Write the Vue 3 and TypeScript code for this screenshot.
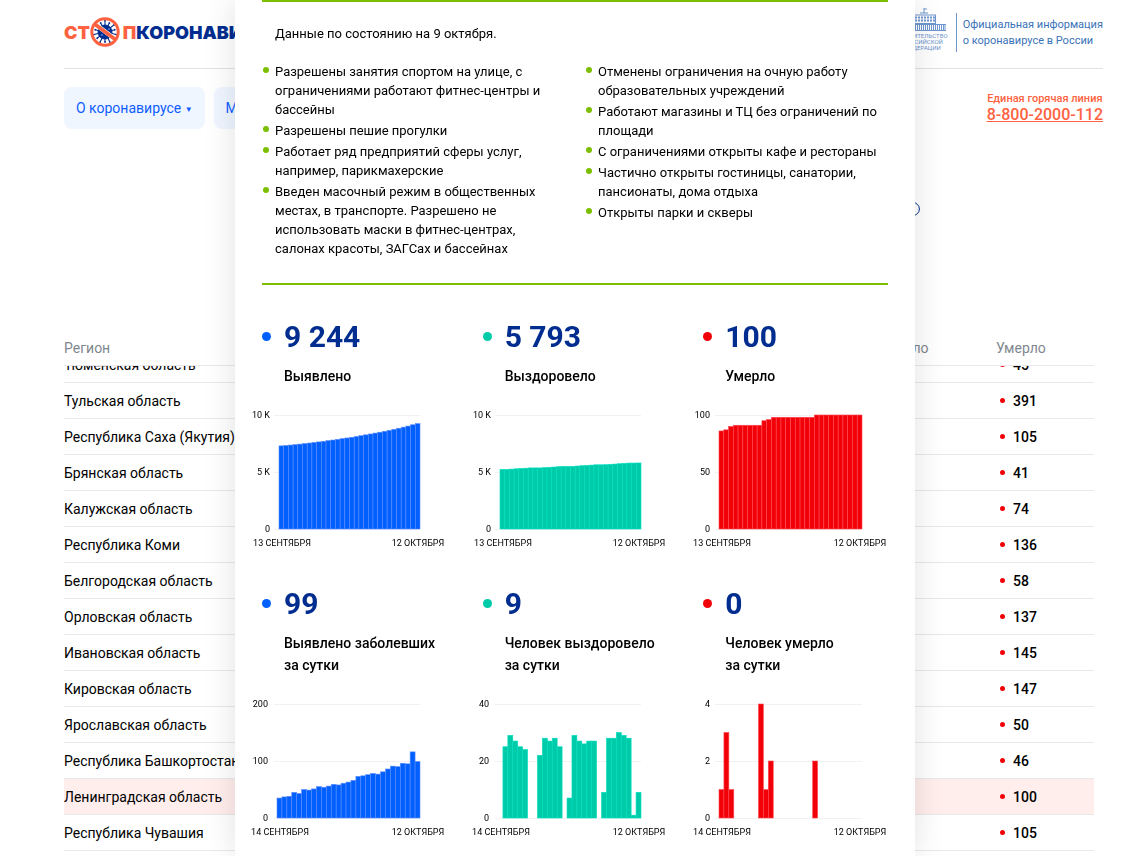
<script setup lang="ts">
import { onMounted, ref } from 'vue'

interface Region {
  name: string
  deaths: number
  active?: boolean
}

interface Stat {
  value: string
  label: string
  color: string
  edge: string
  first: string
  max: number
  ticks: string[]
  start: number
  end: number
  labelEnd: number
  data: number[]
}

const regions: Region[] = [
  { name: 'Тюменская область', deaths: 45 },
  { name: 'Тульская область', deaths: 391 },
  { name: 'Республика Саха (Якутия)', deaths: 105 },
  { name: 'Брянская область', deaths: 41 },
  { name: 'Калужская область', deaths: 74 },
  { name: 'Республика Коми', deaths: 136 },
  { name: 'Белгородская область', deaths: 58 },
  { name: 'Орловская область', deaths: 137 },
  { name: 'Ивановская область', deaths: 145 },
  { name: 'Кировская область', deaths: 147 },
  { name: 'Ярославская область', deaths: 50 },
  { name: 'Республика Башкортостан', deaths: 46 },
  { name: 'Ленинградская область', deaths: 100, active: true },
  { name: 'Республика Чувашия', deaths: 105 }
]

const measures: string[][] = [
  [
    'Разрешены занятия спортом на улице, с ограничениями работают фитнес-центры и бассейны',
    'Разрешены пешие прогулки',
    'Работает ряд предприятий сферы услуг, например, парикмахерские',
    'Введен масочный режим в общественных местах, в транспорте. Разрешено не использовать маски в фитнес-центрах, салонах красоты, ЗАГСах и бассейнах'
  ],
  [
    'Отменены ограничения на очную работу образовательных учреждений',
    'Работают магазины и ТЦ без ограничений по площади',
    'С ограничениями открыты кафе и рестораны',
    'Частично открыты гостиницы, санатории, пансионаты, дома отдыха',
    'Открыты парки и скверы'
  ]
]

const dailyCases = [
  35, 37, 38, 45, 43, 50, 49, 51, 55, 54, 56, 59, 58, 61, 63, 66, 73, 74, 76, 78, 77, 81, 86, 91,
  90, 96, 95, 116, 99
]
const dailyRecovered = [
  0, 25, 29, 27, 25, 24, 0, 0, 22, 28, 27, 28, 25, 0, 7, 29, 27, 26, 27, 27, 0, 9, 28, 28, 30, 29,
  28, 1, 9
]
const dailyDeaths = [
  1, 3, 1, 0, 0, 0, 0, 0, 4, 1, 2, 0, 0, 0, 0, 0, 0, 0, 0, 2, 0, 0, 0, 0, 0, 0, 0, 0, 0
]

function accumulate(daily: number[], total: number): number[] {
  const result = [total - daily.reduce((a, b) => a + b, 0)]
  for (const d of daily) result.push(result[result.length - 1] + d)
  return result
}

const blue = { color: '#0060ff', edge: '#5b8cff' }
const green = { color: '#00cba8', edge: '#00dfc0' }
const red = { color: '#f20008', edge: '#ff4a55' }

const stats: Stat[] = [
  { value: '9 244', label: 'Выявлено', ...blue, first: '13 СЕНТЯБРЯ', max: 10000, ticks: ['10 K', '5 K', '0'], start: 29, end: 170, labelEnd: 20, data: accumulate(dailyCases, 9244) },
  { value: '5 793', label: 'Выздоровело', ...green, first: '13 СЕНТЯБРЯ', max: 10000, ticks: ['10 K', '5 K', '0'], start: 29, end: 170, labelEnd: 20, data: accumulate(dailyRecovered, 5793) },
  { value: '100', label: 'Умерло', ...red, first: '13 СЕНТЯБРЯ', max: 100, ticks: ['100', '50', '0'], start: 28, end: 171, labelEnd: 19, data: accumulate(dailyDeaths, 100) },
  { value: '99', label: 'Выявлено заболевших за\u00a0сутки', ...blue, first: '14 СЕНТЯБРЯ', max: 200, ticks: ['200', '100', '0'], start: 27, end: 170, labelEnd: 18, data: dailyCases },
  { value: '9', label: 'Человек выздоровело за\u00a0сутки', ...green, first: '14 СЕНТЯБРЯ', max: 40, ticks: ['40', '20', '0'], start: 27, end: 170, labelEnd: 18, data: dailyRecovered },
  { value: '0', label: 'Человек умерло за\u00a0сутки', ...red, first: '14 СЕНТЯБРЯ', max: 4, ticks: ['4', '2', '0'], start: 28, end: 171, labelEnd: 19, data: dailyDeaths }
]

const plotTop = 15
const plotHeight = 114

function bars(s: Stat) {
  const step = (s.end - s.start) / s.data.length
  return s.data
    .map((v, i) => {
      const h = (v / s.max) * plotHeight
      return { x: s.start + i * step, y: plotTop + plotHeight - h, w: step, h }
    })
    .filter((b) => b.h > 0)
}

const scroller = ref<HTMLElement | null>(null)
onMounted(() => {
  if (scroller.value) scroller.value.scrollTop = 19
})

const spikes = Array.from({ length: 14 }, (_, i) => (i * 360) / 14)
</script>

<template>
  <div class="page">
    <header class="header">
      <a class="logo" href="#" aria-label="Стопкоронавирус">
        <span class="stop">СТ</span>
        <svg class="sign" width="32" height="32" viewBox="0 0 32 32" aria-hidden="true">
          <g stroke="#002d8f" fill="#002d8f">
            <circle cx="16" cy="16" r="7" />
            <g v-for="(a, i) in spikes" :key="a" :transform="`rotate(${a} 16 16)`">
              <line x1="16" y1="10" x2="16" :y2="i % 2 ? 6 : 4.5" stroke-width="1.1" />
              <circle cx="16" :cy="i % 2 ? 6 : 4.5" r="0.9" stroke="none" />
            </g>
          </g>
          <circle cx="13" cy="19" r="1" fill="#5d84cf" />
          <circle cx="20" cy="13" r="0.9" fill="#5d84cf" />
          <line x1="6" y1="8" x2="26" y2="23" stroke="#fff" stroke-width="4.6" />
          <line x1="5" y1="7.5" x2="27" y2="24" stroke="#ff6240" stroke-width="3.6" />
          <circle cx="16" cy="16" r="13.2" fill="none" stroke="#ff6240" stroke-width="3" />
        </svg>
        <span class="stop">П</span><span class="corona">КОРОНАВИРУС</span>
      </a>
      <div class="official">
        <div class="gov">
          <svg width="48" height="24" viewBox="0 0 48 24" aria-hidden="true">
            <g fill="none" stroke="#6f97cf">
              <path d="M25 5V0M25 1h3" />
              <path d="M21 5h8M9 7h28" />
              <path d="M10 9.500h27M10 12.500h27" stroke-width="2" stroke-dasharray="2 1" />
              <path d="M9 15.500h28M1 22.500h46M1 16.500h46" />
              <path d="M2 19.500h44" stroke-width="5" stroke-dasharray="1 1" />
              <path d="M10 7v9M36.500 7v9M2 17v6M46 17v6" />
            </g>
          </svg>
          <span>ПРАВИТЕЛЬСТВО</span>
          <span>РОССИЙСКОЙ</span>
          <span>ФЕДЕРАЦИИ</span>
        </div>
        <p>Официальная информация<br />о коронавирусе в России</p>
      </div>
    </header>

    <div class="bar">
      <nav class="nav">
        <button type="button">О коронавирусе <small>▼</small></button>
        <button type="button">Меры</button>
      </nav>
      <div class="hotline">
        <span>Единая горячая линия</span>
        <a href="tel:88002000112">8-800-2000-112</a>
      </div>
    </div>

    <div class="hint">
      <button type="button" aria-label="Подробнее">
        <svg width="14" height="14" viewBox="0 0 14 14" fill="none" stroke="#002d8f">
          <circle cx="7" cy="7" r="6.4" />
          <path d="M7 6v4M7 3.500v1" />
        </svg>
      </button>
    </div>

    <div ref="scroller" class="scroller">
      <table>
        <thead>
          <tr>
            <th class="c-name">Регион</th>
            <th class="c-mid">Выявлено</th>
            <th class="c-rec">Выздоровело</th>
            <th class="c-dead">Умерло</th>
          </tr>
        </thead>
        <tbody>
          <tr v-for="r in regions" :key="r.name" :class="{ active: r.active }">
            <td>{{ r.name }}</td>
            <td></td>
            <td></td>
            <td class="num"><i></i>{{ r.deaths }}</td>
          </tr>
        </tbody>
      </table>
    </div>
  </div>

  <div class="overlay">
    <section class="modal" role="dialog" aria-label="Ленинградская область">
      <div class="measures">
        <p>Данные по состоянию на 9 октября.</p>
        <div class="lists">
          <ul v-for="(list, i) in measures" :key="i">
            <li v-for="m in list" :key="m">{{ m }}</li>
          </ul>
        </div>
      </div>
      <div class="stats">
        <article v-for="s in stats" :key="s.label" class="stat">
          <div class="value"><i :style="{ background: s.color }"></i>{{ s.value }}</div>
          <div class="label">{{ s.label }}</div>
          <svg class="chart" width="204" height="160" viewBox="0 0 204 160">
            <g v-for="(t, i) in s.ticks" :key="t">
              <line x1="24" :x2="s.end" :y1="15.5 + i * 57" :y2="15.5 + i * 57" stroke="#f1f1f1" />
              <text :x="s.labelEnd" :y="18 + i * 57" text-anchor="end">{{ t }}</text>
            </g>
            <g :fill="s.color" :stroke="s.edge">
              <rect v-for="(b, i) in bars(s)" :key="i" :x="b.x" :y="b.y" :width="b.w" :height="b.h" stroke-width="0.6" />
            </g>
            <text :x="s.start + 3" y="146" text-anchor="middle">{{ s.first }}</text>
            <text :x="s.end - 2" y="146" text-anchor="middle">12 ОКТЯБРЯ</text>
          </svg>
        </article>
      </div>
    </section>
  </div>
</template>

<style>
html,
body {
  height: 100%;
  background: #fff;
  overflow: hidden;
}
</style>

<style scoped>
.page,
.overlay {
  font-family: Roboto, 'Liberation Sans', sans-serif;
  color: #000;
}
.page {
  display: flex;
  flex-direction: column;
  height: 100vh;
  box-sizing: border-box;
  padding: 0 37px 0 64px;
}
button {
  font: inherit;
  border: 0;
  padding: 0;
  background: none;
  cursor: pointer;
}
.header {
  display: flex;
  justify-content: space-between;
  height: 68px;
  border-bottom: 1px solid #e2e2e2;
}
.logo {
  display: flex;
  align-items: center;
  height: 64px;
  font: 900 18px Inter, sans-serif;
  text-decoration: none;
}
.sign {
  margin: 0 2px 0 -1px;
}
.stop {
  color: #ff6240;
}
.corona {
  color: #002d8f;
}
.official {
  display: flex;
  align-items: flex-start;
  color: #3a72b8;
}
.gov {
  display: flex;
  flex-direction: column;
  align-items: center;
  width: 50px;
  padding: 8px 8px 0 0;
  font-size: 6px;
  line-height: 6px;
  color: #6f97cf;
}
.gov svg {
  margin-bottom: 1px;
}
.official p {
  margin: 13px 0 0;
  padding: 4px 0 3px 6px;
  border-left: 1px solid #6f97cf;
  font-size: 11px;
  line-height: 16px;
}
.bar {
  display: flex;
  justify-content: space-between;
  padding-top: 18px;
}
.nav {
  display: flex;
  gap: 9px;
}
.nav button {
  height: 42px;
  padding: 0 12px;
  border-radius: 8px;
  background: #f0f6ff;
  color: #0f5dff;
  font-size: 14px;
}
.nav small {
  font-size: 8px;
  vertical-align: 1px;
}
.hotline {
  display: flex;
  flex-direction: column;
  align-items: center;
  padding-top: 5px;
  color: #ff6240;
  font-weight: 500;
  font-size: 11px;
  line-height: 14px;
}
.hotline a {
  color: inherit;
  font-size: 16px;
  line-height: 18px;
}
.hint {
  display: flex;
  justify-content: flex-end;
  padding: 73px 183px 0 0;
}
.hint svg {
  display: block;
}
.scroller {
  flex: 1;
  min-height: 0;
  margin: 115px 9px 0 0;
  overflow-y: auto;
  scrollbar-width: none;
}
table {
  width: 100%;
  margin-bottom: 36px;
  table-layout: fixed;
  border-collapse: separate;
  border-spacing: 0;
  font-size: 14px;
}
th {
  position: sticky;
  top: 0;
  height: 35px;
  box-sizing: border-box;
  padding: 0;
  border-bottom: 1px solid #e8e8e8;
  background: #fff;
  color: #7f8790;
  font-weight: 400;
  text-align: left;
}
td {
  height: 36px;
  box-sizing: border-box;
  padding: 1px 0 0;
  border-bottom: 1px solid #e8e8e8;
  white-space: nowrap;
}
.c-mid {
  width: 20%;
}
.c-rec {
  width: 158px;
}
.c-dead {
  width: 98px;
}
.num {
  padding-left: 4px;
  font-weight: 500;
}
.num i {
  display: inline-block;
  width: 5px;
  height: 5px;
  margin-right: 8px;
  border-radius: 50%;
  background: #f20008;
  vertical-align: 3px;
}
.active td {
  background: #ffeeec;
}
.overlay {
  position: fixed;
  inset: 0;
  display: flex;
  justify-content: center;
  padding-left: 10px;
  overflow: hidden;
}
.modal {
  width: 680px;
  height: max-content;
  min-height: 100%;
  box-sizing: border-box;
  padding: 0 27px;
  background: #fff;
  box-shadow: 0 0 30px rgba(0, 0, 0, 0.12);
}
.measures {
  border-top: 2px solid #7bbf00;
  border-bottom: 2px solid #7bbf00;
  padding: 22px 0 25px;
  font-size: 13px;
  line-height: 19px;
}
.measures p {
  margin: 0 0 19px 13px;
}
.lists {
  display: grid;
  grid-template-columns: 1fr 1fr;
  gap: 20px;
}
ul {
  display: flex;
  flex-direction: column;
  gap: 2px;
  margin: 0;
  padding: 0;
  list-style: none;
}
li {
  position: relative;
  padding: 0 6px 0 13px;
}
li::before {
  content: '';
  position: absolute;
  left: 1px;
  top: 5px;
  width: 6px;
  height: 6px;
  border-radius: 50%;
  background: #7bbf00;
}
.stats {
  display: grid;
  grid-template-columns: repeat(3, 1fr);
  gap: 25px 18px;
  margin-right: -18px;
  padding: 33px 0 0;
}
.value {
  display: flex;
  align-items: center;
  height: 36px;
  color: #002d8f;
  font-size: 30px;
  font-weight: 700;
}
.value i {
  width: 9px;
  height: 9px;
  margin-right: 13px;
  border-radius: 50%;
}
.label {
  margin: 11px 20px 13px 22px;
  font-size: 14px;
  font-weight: 500;
  line-height: 22px;
}
.chart {
  display: block;
  margin-left: -12px;
}
.chart text {
  font-size: 9px;
  fill: #000;
}
</style>
